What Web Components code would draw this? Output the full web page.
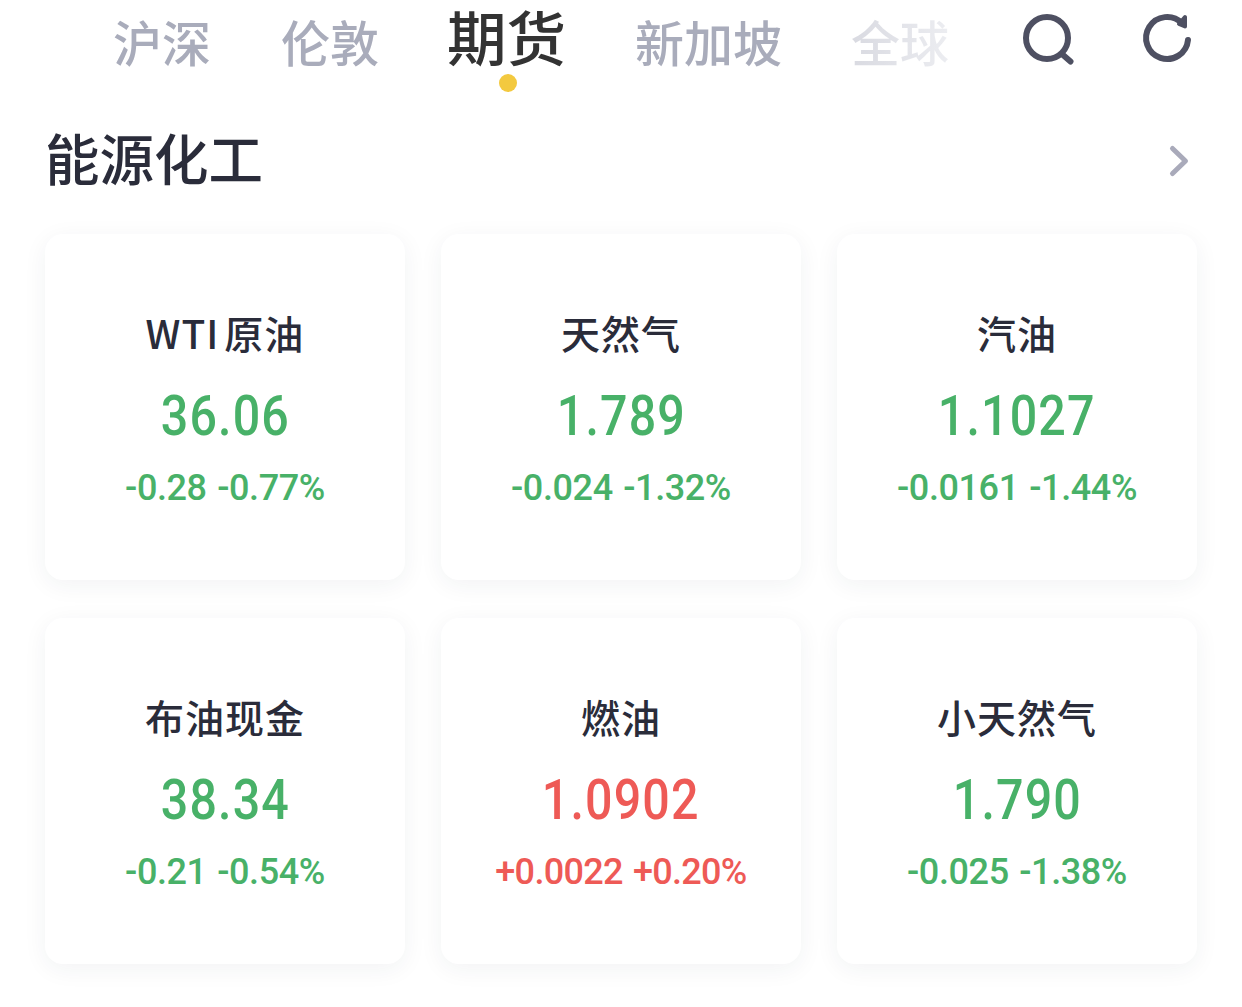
<!DOCTYPE html>
<html>
<head>
<meta charset="utf-8">
<style>
  html, body { margin: 0; background: #fff; }
  body { font-family: "Noto Sans CJK SC", "Noto Sans", sans-serif; width: 1242px; height: 1007px; overflow: hidden; }
</style>
</head>
<body>
<template id="marketTabs">
  <style>
    :host { display: flex; align-items: flex-start; height: 92px; padding-left: 113px; box-sizing: border-box; gap: 70px; }
    ::slotted(*) { flex: none; }
    .icons { display: flex; gap: 64px; margin-left: 1px; padding-top: 12px; }
    svg { display: block; fill: none; stroke: #4e5062; stroke-width: 6; stroke-linecap: round; stroke-linejoin: round; }
  </style>
  <slot></slot>
  <div class="icons">
    <svg width="56" height="54" viewBox="0 0 56 54"><circle cx="27" cy="26" r="21"/><path d="M42.500 42.500l8 7"/></svg>
    <svg width="54" height="54" viewBox="0 0 54 54"><path d="M48 28a21 21 0 1 1-6-16.800"/><path d="M45 5v9.500l-6-2.500z" fill="#4e5062" stroke-width="4"/></svg>
  </div>
</template>
<template id="marketTab">
  <style>
    :host { display: block; position: relative; height: 72px; margin-top: 5px; font-size: 49px; line-height: 72px; color: #a9acbb; font-weight: 500; }
    :host([active]) { font-size: 59.500px; color: #333; height: 76px; line-height: 70px; margin: 0 -1px 0 -2px; }
    :host([fade]) { margin-left: -1px; }
    :host([fade]) span { background: linear-gradient(90deg, #d9dae1, #eceDf1); -webkit-background-clip: text; background-clip: text; color: transparent; }
    i { display: none; position: absolute; left: 52px; top: 74px; width: 18px; height: 18px; border-radius: 50%; background: #f3c93f; }
    :host([active]) i { display: block; }
  </style>
  <span><slot></slot></span><i></i>
</template>
<template id="sectionHead">
  <style>
    :host { display: flex; justify-content: space-between; align-items: center; height: 80px; margin-top: 24px; padding: 0 52px 0 45px; font-size: 54.500px; font-weight: 500; color: #2a2c3a; }
    svg { display: block; margin-top: 10px; fill: none; stroke: #a9aaba; stroke-width: 5; stroke-linecap: round; stroke-linejoin: round; }
  </style>
  <slot></slot>
  <svg width="22" height="34" viewBox="0 0 22 34"><path d="M4.500 4.500l13 12.500-13 12.500"/></svg>
</template>
<template id="quoteGrid">
  <style>
    :host { display: grid; grid-template-columns: repeat(3, 360px); column-gap: 36px; row-gap: 38px; margin: 38px 45px 0; }
  </style>
  <slot></slot>
</template>
<template id="quoteCard">
  <style>
    :host { display: flex; flex-direction: column; align-items: center; box-sizing: border-box; height: 346px; border-radius: 18px; background: #fff; box-shadow: 0 5px 24px rgba(40, 44, 70, .06); color: #48b168; padding-top: 69px; }
    :host([up]) { color: #ee5a56; }
    .name { font-size: 39px; font-weight: 500; line-height: 58px; height: 58px; color: #2a2c3a; letter-spacing: 1px; }
    .price { font-family: Roboto, sans-serif; font-size: 55px; font-weight: 500; line-height: 64px; margin-top: 23px; letter-spacing: 1.300px; transform: scaleX(.88); }
    .change { font-family: Roboto, sans-serif; font-size: 36px; font-weight: 500; line-height: 44px; margin-top: 18px; letter-spacing: -.4px; word-spacing: 2px; white-space: nowrap; }
    :host([up]) .change { letter-spacing: -.7px; }
  </style>
  <div class="name"><slot name="name"></slot></div>
  <div class="price"><slot name="price"></slot></div>
  <div class="change"><slot name="change"></slot></div>
</template>

<market-tabs>
  <market-tab>沪深</market-tab>
  <market-tab>伦敦</market-tab>
  <market-tab active>期货</market-tab>
  <market-tab>新加坡</market-tab>
  <market-tab fade>全球</market-tab>
</market-tabs>
<section-head>能源化工</section-head>
<quote-grid>
  <quote-card><span slot="name"><span style="margin-right:5px">WTI</span>原油</span><span slot="price">36.06</span><span slot="change">-0.28 -0.77%</span></quote-card>
  <quote-card><span slot="name">天然气</span><span slot="price">1.789</span><span slot="change">-0.024 -1.32%</span></quote-card>
  <quote-card><span slot="name">汽油</span><span slot="price">1.1027</span><span slot="change">-0.0161 -1.44%</span></quote-card>
  <quote-card><span slot="name">布油现金</span><span slot="price">38.34</span><span slot="change">-0.21 -0.54%</span></quote-card>
  <quote-card up><span slot="name">燃油</span><span slot="price">1.0902</span><span slot="change">+0.0022 +0.20%</span></quote-card>
  <quote-card><span slot="name">小天然气</span><span slot="price">1.790</span><span slot="change">-0.025 -1.38%</span></quote-card>
</quote-grid>

<script>
  class ShadowBlock extends HTMLElement {
    connectedCallback() {
      if (this.shadowRoot) return
      const template = document.querySelector('#' + this.constructor.templateId)
      this.attachShadow({ mode: 'open' }).appendChild(template.content.cloneNode(true))
    }
  }
  class MarketTabs extends ShadowBlock { static templateId = 'marketTabs' }
  class MarketTab extends ShadowBlock { static templateId = 'marketTab' }
  class SectionHead extends ShadowBlock { static templateId = 'sectionHead' }
  class QuoteGrid extends ShadowBlock { static templateId = 'quoteGrid' }
  class QuoteCard extends ShadowBlock { static templateId = 'quoteCard' }

  customElements.define('market-tabs', MarketTabs)
  customElements.define('market-tab', MarketTab)
  customElements.define('section-head', SectionHead)
  customElements.define('quote-grid', QuoteGrid)
  customElements.define('quote-card', QuoteCard)
</script>
</body>
</html>
